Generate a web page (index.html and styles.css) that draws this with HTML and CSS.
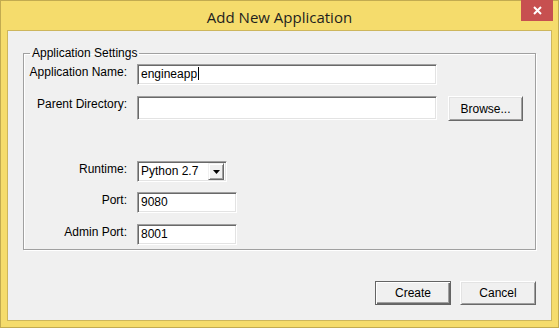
FILE: index.html
```html
<!DOCTYPE html>
<html>
<head>
<meta charset="utf-8">
<link rel="stylesheet" href="styles.css">
</head>
<body>
<div class="window">
  <div class="titlebar">
    <span class="title">Add New Application</span>
    <div class="close">
      <svg width="9" height="9" viewBox="0 0 9 9"><path d="M1 1 L8 8 M8 1 L1 8" stroke="#fff" stroke-width="2" fill="none"/></svg>
    </div>
  </div>
  <div class="client">
    <fieldset class="group">
      <legend class="legend">Application Settings</legend>
      <div class="row r1">
        <span class="label">Application Name:</span>
        <div class="field wide">engineapp<span class="caret"></span></div>
      </div>
      <div class="row r2">
        <span class="label">Parent Directory:</span>
        <div class="field wide tall"></div>
        <div class="btn browse">Browse...</div>
      </div>
      <div class="row r3">
        <span class="label">Runtime:</span>
        <div class="field select">
          <span class="sel-text">Python 2.7</span>
          <span class="arrow"><svg width="7" height="4" viewBox="0 0 7 4"><path d="M0 0 H7 L3.5 4 Z" fill="#000"/></svg></span>
        </div>
      </div>
      <div class="row r4">
        <span class="label">Port:</span>
        <div class="field narrow">9080</div>
      </div>
      <div class="row r5">
        <span class="label">Admin Port:</span>
        <div class="field narrow">8001</div>
      </div>
    </fieldset>
    <div class="actions">
      <div class="btn default">Create</div>
      <div class="btn">Cancel</div>
    </div>
  </div>
</div>
</body>
</html>
```

FILE: styles.css
```css
* { box-sizing: border-box; }
html, body { margin: 0; padding: 0; }
body {
  width: 559px;
  height: 328px;
  overflow: hidden;
  font-family: "Liberation Sans", Arial, sans-serif;
  font-size: 12px;
  color: #000;
}
.window {
  width: 559px;
  height: 328px;
  background: #f5dc6c;
  border: 1px solid #c2ab50;
  display: flex;
  flex-direction: column;
}
.titlebar {
  height: 29px;
  position: relative;
  display: flex;
  justify-content: center;
  align-items: flex-start;
}
.title {
  font-family: "Open Sans", "Noto Sans", sans-serif;
  font-size: 15px;
  line-height: 20px;
  margin-top: 6px;
  color: #1e1e1e;
}
.close {
  position: absolute;
  top: -1px;
  left: 520px;
  width: 32px;
  height: 21px;
  background: #c75050;
  display: flex;
  align-items: center;
  justify-content: center;
}
.close svg { display: block; margin-left: 1px; }
.client {
  margin: 0 6px 6px 6px;
  flex: 1;
  background: #f0f0f0;
  border: 1px solid #cdb65c;
  padding: 15px 15px 0 15px;
  display: flex;
  flex-direction: column;
}
.group {
  margin: 0;
  padding: 4px 0 4px 0;
  border: 1px solid #a0a0a0;
  box-shadow: inset 1px 1px 0 #fff, 1px 1px 0 #fff;
  min-inline-size: 0;
}
.legend {
  margin-left: 6px;
  padding: 0 2px;
  line-height: 14px;
  font-size: 12px;
}
.row {
  display: flex;
  align-items: flex-start;
}
.r1 { margin-top: 0; }
.r2 { margin-top: 11px; }
.r3 { margin-top: 40px; }
.r4 { margin-top: 10px; }
.r5 { margin-top: 11px; }
.label {
  width: 103px;
  margin-right: 10px;
  text-align: right;
  line-height: 14px;
  padding-top: 1px;
  white-space: nowrap;
}
.field {
  height: 21px;
  background: #fff;
  border-top: 1px solid #a0a0a0;
  border-left: 1px solid #a0a0a0;
  border-right: 1px solid #fff;
  border-bottom: 1px solid #fff;
  box-shadow: inset 1px 1px 0 #696969, inset -1px -1px 0 #e3e3e3;
  padding: 0 3px;
  line-height: 19px;
  white-space: nowrap;
}
.wide { width: 300px; }
.tall { height: 24px; }
.narrow { width: 100px; }
.caret {
  display: inline-block;
  width: 1px;
  height: 13px;
  background: #000;
  vertical-align: -2px;
  margin-left: 1px;
}
.select {
  width: 90px;
  display: flex;
  align-items: flex-start;
  justify-content: space-between;
  padding: 0 2px 0 3px;
}
.sel-text { line-height: 19px; }
.arrow {
  width: 16px;
  height: 17px;
  margin-top: 1px;
  background: #f0f0f0;
  border-top: 1px solid #f0f0f0;
  border-left: 1px solid #f0f0f0;
  border-right: 1px solid #696969;
  border-bottom: 1px solid #696969;
  box-shadow: inset 1px 1px 0 #fff, inset -1px -1px 0 #a0a0a0;
  display: flex;
  align-items: center;
  justify-content: center;
}
.arrow svg { display: block; }
.btn {
  width: 76px;
  height: 24px;
  background: #f0f0f0;
  border-top: 1px solid #fff;
  border-left: 1px solid #fff;
  border-right: 1px solid #696969;
  border-bottom: 1px solid #696969;
  box-shadow: inset 1px 1px 0 #e3e3e3, inset -1px -1px 0 #a0a0a0;
  display: flex;
  align-items: center;
  justify-content: center;
  line-height: 14px;
}
.browse {
  width: 75px;
  height: 25px;
  margin-left: 11px;
}
.actions {
  margin-top: 31px;
  display: flex;
  justify-content: flex-end;
  gap: 9px;
}
.btn.default {
  border: 1px solid #646464;
  box-shadow: inset 1px 1px 0 #fff, inset -1px -1px 0 #696969, inset -2px -2px 0 #a0a0a0;
}
```
